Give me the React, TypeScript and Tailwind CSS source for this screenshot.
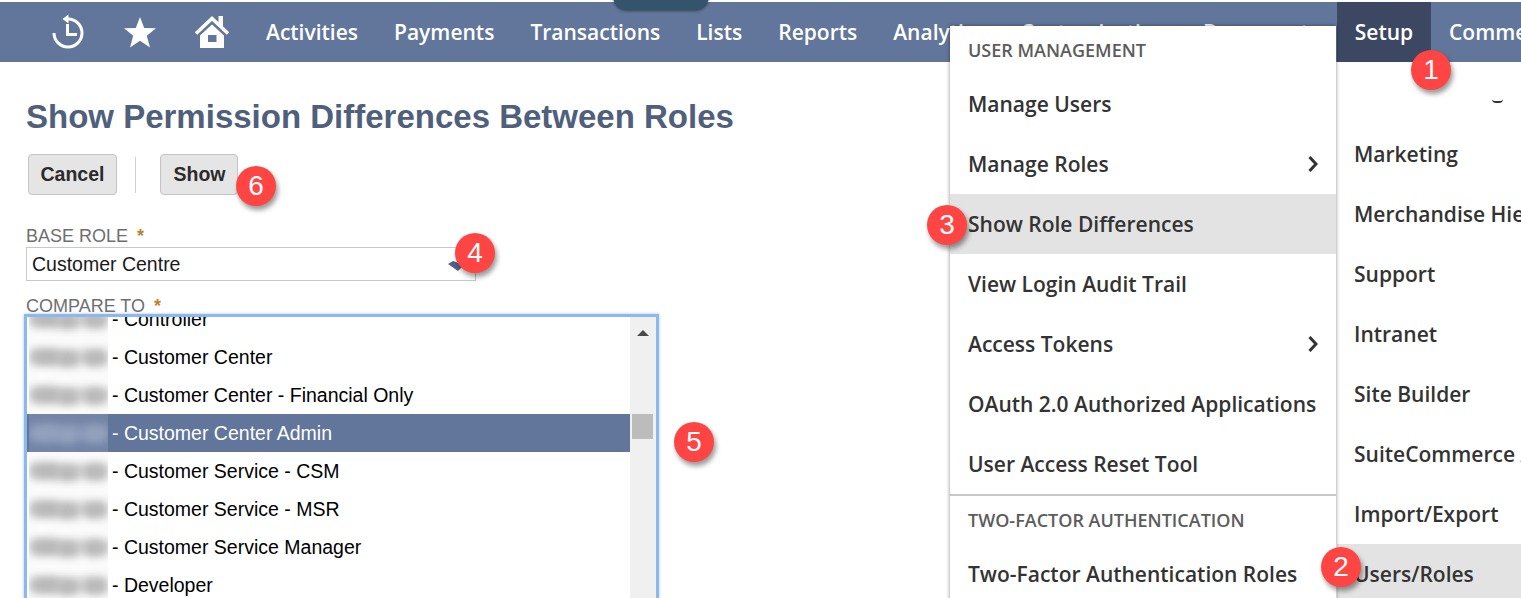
import React from "react";

const nav = ["Activities", "Payments", "Transactions", "Lists", "Reports", "Analytics", "Customization", "Documents"];
const rows = ["Controller", "Customer Center", "Customer Center - Financial Only", "Customer Center Admin", "Customer Service - CSM", "Customer Service - MSR", "Customer Service Manager", "Developer"];
const sans = "font-['Open_Sans',sans-serif]";

function Badge({ n, className }: { n: number; className: string }) {
  return (
    <div className={`absolute z-30 flex h-10 w-10 items-center justify-center rounded-full bg-[#ff4444] text-[28px] leading-none text-white shadow-[2px_4px_5px_rgba(0,0,0,0.4)] font-['Liberation_Sans',sans-serif] ${className}`}>
      {n}
    </div>
  );
}

function Chevron() {
  return (
    <svg width="10" height="16" viewBox="0 0 10 16" className="absolute right-[18px] top-1/2 -translate-y-1/2">
      <path d="M1.5 1 L8 8 L1.5 15" fill="none" stroke="#333" strokeWidth="3" />
    </svg>
  );
}

function MenuItem({ label, chevron, active }: { label: string; chevron?: boolean; active?: boolean }) {
  return (
    <div className={`relative flex h-[60px] items-center pl-[18px] pt-[2px] text-[21px] font-semibold text-[#333] ${active ? "bg-[#e3e3e3]" : ""}`}>
      {label}
      {chevron && <Chevron />}
    </div>
  );
}

function Blur({ selected }: { selected?: boolean }) {
  const blob = selected ? "bg-[#93a2be]" : "bg-[#b8b8b8]";
  const band = selected ? "bg-[#8797b5]" : "bg-[#d6d6d6]";
  return (
    <div className={`relative ml-[2px] h-[38px] w-[79px] shrink-0 overflow-hidden ${selected ? "bg-[#7486a8]" : "bg-[#fbfbfb]"}`}>
      <div className={`absolute inset-x-0 top-[12px] h-[14px] blur-[4px] ${band}`} />
      <div className={`absolute left-[2px] top-[11px] h-[16px] w-[30px] rounded-full blur-[4px] ${blob}`} />
      <div className={`absolute left-[28px] top-[13px] h-[16px] w-[22px] rounded-full blur-[4px] ${blob}`} />
      <div className={`absolute left-[54px] top-[12px] h-[16px] w-[24px] rounded-full blur-[4px] ${blob}`} />
    </div>
  );
}

export default function App() {
  return (
    <div className="relative h-[598px] w-[1521px] overflow-hidden bg-white font-['Liberation_Sans',sans-serif]">
      <div className="absolute left-[613px] top-[-20px] z-10 h-[30px] w-[96px] rounded-[14px] bg-[#33546b] shadow-[0_1px_3px_rgba(0,0,0,0.45)]" />

      <header className={`relative mt-[2px] flex h-[60px] items-center gap-[36px] whitespace-nowrap bg-[#61769a] pl-[50px] text-[21px] font-semibold text-white ${sans}`}>
        <svg width="36" height="36" viewBox="0 0 36 36" fill="none" stroke="white" strokeWidth="3">
          <path d="M4 19 A 14 14 0 1 0 18 5" />
          <path d="M12.5 5 L18.5 0.5 V9.5 Z" fill="white" stroke="none" />
          <path d="M17.5 10 V20.5 H27" />
        </svg>
        <svg width="34" height="34" viewBox="0 0 34 34" fill="white" className="ml-[1px]">
          <path d="M17 2 L21.2 13 L33 13.3 L23.8 20.8 L27 32.5 L17 25.8 L7 32.5 L10.2 20.8 L1 13.3 L12.8 13 Z" />
        </svg>
        <svg width="36" height="34" viewBox="0 0 36 34" fill="white" className="ml-[1px]">
          <path d="M24.5 1 H29 V11 H24.5 Z" />
          <path d="M2 18.5 L18 3.5 L34 18.5" fill="none" stroke="white" strokeWidth="3.5" />
          <path d="M18 9.5 L30 20.5 V33 H6 V20.5 Z M14 20 V27 H22.5 V20 Z" fillRule="evenodd" />
        </svg>
        {nav.map((n) => (
          <span key={n} className="mt-[2px]">{n}</span>
        ))}
        <div className="absolute left-[1337px] top-0 flex h-[60px] w-[94px] items-center justify-center bg-[#3c4862] pt-[2px]">Setup</div>
        <div className="absolute left-[1449px] top-0 flex h-[60px] items-center pt-[2px]">Commerce</div>
      </header>

      <main className="pl-[26px] pt-[33px]">
        <h1 className="text-[33px] font-bold leading-[44px] text-[#4f5f7c]">Show Permission Differences Between Roles</h1>
        <div className="mt-[15px] flex items-center pl-[2px]">
          <button className="h-[41px] w-[89px] rounded-[4px] border border-[#c4c4c4] bg-[#e5e5e5] text-[19.5px] font-bold text-[#2b2b2b]">Cancel</button>
          <div className="ml-[18px] h-[36px] w-px bg-[#cfcfcf]" />
          <button className="ml-[24px] h-[41px] w-[78px] rounded-[4px] border border-[#c4c4c4] bg-[#e5e5e5] pl-[1px] text-[19.5px] font-bold text-[#2b2b2b]">Show</button>
        </div>
        <div className="mt-[29px] flex h-[22px] items-center pt-[2px] text-[18px] leading-none text-[#6f6f6f]">
          BASE ROLE<span className="ml-[9px] font-bold text-[#c0812e]">*</span>
        </div>
        <div className="relative mt-[1px] flex h-[34px] w-[450px] items-center border border-[#c8c8c8] pl-[5px] pt-[2px] text-[19.5px] text-[#1a1a1a]">
          Customer Centre
          <svg width="16" height="12" viewBox="0 0 16 12" className="absolute right-[11px] top-[13px]" fill="#4d648d">
            <path d="M0 3 L5 0 L16 4 L10 10 Z" />
          </svg>
        </div>
        <div className="mt-[13px] flex h-[22px] items-center pt-[2px] text-[18px] leading-none text-[#6f6f6f]">
          COMPARE TO<span className="ml-[9px] font-bold text-[#c0812e]">*</span>
        </div>
        <div className="ml-[-2px] mt-[-2px] flex h-[302px] w-[635px] overflow-hidden border-[3px] border-b-0 border-[#8db8ec] shadow-[0_0_3px_#a8c8f0]">
          <div className="min-w-0 flex-1 overflow-hidden">
            <div className="mt-[-17px]">
              {rows.map((r) => {
                const selected = r === "Customer Center Admin";
                return (
                  <div key={r} className={`flex h-[38px] items-center text-[19.5px] ${selected ? "bg-[#61769a] text-white" : "text-black"}`}>
                    <Blur selected={selected} />
                    <span className="ml-[4px] mt-[2px] whitespace-nowrap">- {r}</span>
                  </div>
                );
              })}
            </div>
          </div>
          <div className="relative w-[26px] shrink-0 bg-[#f0f0f0]">
            <div className="absolute left-[7px] top-[13px] h-0 w-0 border-x-[6px] border-b-[6px] border-x-transparent border-b-[#4a4a4a]" />
            <div className="absolute left-[2px] top-[97px] h-[25px] w-[21px] bg-[#bcbcbc]" />
          </div>
        </div>
      </main>

      <div className={`absolute left-[950px] top-[26px] z-20 h-[580px] w-[386px] bg-white shadow-[0_0_4px_rgba(0,0,0,0.45)] ${sans}`}>
        <div className="flex h-[48px] items-center pl-[18px] text-[18px] font-semibold text-[#5c5c5c]">USER MANAGEMENT</div>
        <MenuItem label="Manage Users" />
        <MenuItem label="Manage Roles" chevron />
        <MenuItem label="Show Role Differences" active />
        <MenuItem label="View Login Audit Trail" />
        <MenuItem label="Access Tokens" chevron />
        <MenuItem label="OAuth 2.0 Authorized Applications" />
        <MenuItem label="User Access Reset Tool" />
        <div className="h-[2px] bg-[#c8c8c8]" />
        <div className="flex h-[48px] items-center pl-[18px] text-[18px] font-semibold text-[#5c5c5c]">TWO-FACTOR AUTHENTICATION</div>
        <MenuItem label="Two-Factor Authentication Roles" />
      </div>

      <div className={`absolute left-[1337px] top-[64px] z-10 h-[540px] w-[184px] overflow-hidden whitespace-nowrap bg-white ${sans}`}>
        <div className="flex h-[60px] items-start justify-end pr-[18px] pt-[35px]">
          <div className="h-[4px] w-[11px] rounded-b-full border-b-2 border-[#333]" />
        </div>
        {["Marketing", "Merchandise Hierarchy", "Support", "Intranet", "Site Builder", "SuiteCommerce Advanced", "Import/Export", "Users/Roles"].map((m) => (
          <div key={m} className={`flex h-[60px] items-center pl-[17px] pt-[2px] text-[21px] font-semibold text-[#333] ${m === "Users/Roles" ? "bg-[#e3e3e3]" : ""}`}>{m}</div>
        ))}
      </div>

      <Badge n={1} className="left-[1411px] top-[50px]" />
      <Badge n={2} className="left-[1321px] top-[547px]" />
      <Badge n={3} className="left-[927px] top-[205px]" />
      <Badge n={4} className="left-[455px] top-[233px]" />
      <Badge n={5} className="left-[674px] top-[422px]" />
      <Badge n={6} className="left-[236px] top-[166px]" />
    </div>
  );
}
